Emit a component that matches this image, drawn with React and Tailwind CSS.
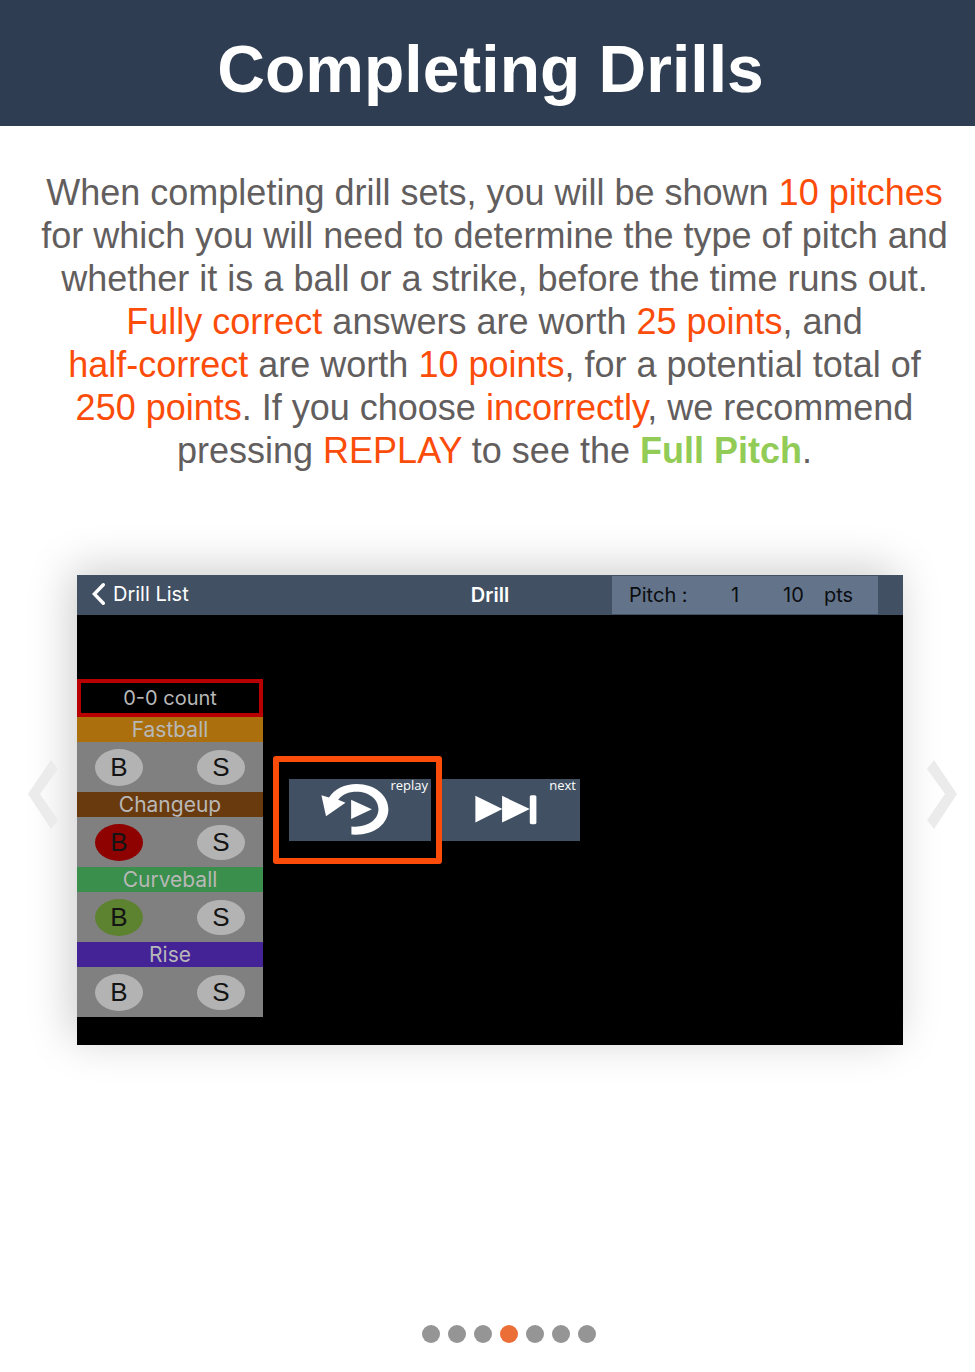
const pitches = [
  { name: 'Fastball', band: 'bg-[#ab700d]', ball: 'bg-[#b3b3b3]' },
  { name: 'Changeup', band: 'bg-[#6a3a0f]', ball: 'bg-[#8f0202]' },
  { name: 'Curveball', band: 'bg-[#398f4b]', ball: 'bg-[#5d8230]' },
  { name: 'Rise', band: 'bg-[#432396]', ball: 'bg-[#b3b3b3]' },
];

const slides = [1, 2, 3, 4, 5, 6, 7];
const currentSlide = 4;

function Hot({ children }) {
  return <span className="text-[#fc4c0a]">{children}</span>;
}

function Header() {
  return (
    <header className="flex h-[126px] items-center justify-center bg-[#2f3d52] pt-3 pl-[6px]">
      <h1 className="text-[66px] leading-none font-bold text-white">Completing Drills</h1>
    </header>
  );
}

function Intro() {
  return (
    <p className="pt-[45px] pl-[14px] text-center text-[36px] leading-[43px] text-[#625e5e]">
      When completing drill sets, you will be shown <Hot>10 pitches</Hot>
      <br />
      for which you will need to determine the type of pitch and
      <br />
      whether it is a ball or a strike, before the time runs out.
      <br />
      <Hot>Fully correct</Hot> answers are worth <Hot>25 points</Hot>, and
      <br />
      <Hot>half-correct</Hot> are worth <Hot>10 points</Hot>, for a potential total of
      <br />
      <Hot>250 points</Hot>. If you choose <Hot>incorrectly</Hot>, we recommend
      <br />
      pressing <Hot>REPLAY</Hot> to see the <b className="text-[#92cc57]">Full Pitch</b>.
    </p>
  );
}

function DrillBar() {
  return (
    <div className="grid h-10 grid-cols-[1fr_auto_1fr] items-center bg-[#415163] text-[20px] leading-none text-white">
      <a href="#drills" className="flex h-[38px] items-center gap-2 self-start pl-[15px]">
        <svg className="h-[22px] w-[13px]" viewBox="0 0 13 22" fill="none" stroke="currentColor" strokeWidth="3.4" strokeLinecap="round" strokeLinejoin="miter" aria-hidden="true">
          <path d="M11.3 1.8 L2.3 11 L11.3 20.2" />
        </svg>
        Drill List
      </a>
      <h2 className="font-semibold">Drill</h2>
      <div className="flex justify-end pr-[25px]">
        <div className="flex h-[38px] w-[266px] items-center bg-[#63748a] pl-[17px] text-[#0b0d10]">
          <span className="w-[102px]">Pitch :</span>
          <span className="w-[52px]">1</span>
          <span className="w-[41px]">10</span>
          <span>pts</span>
        </div>
      </div>
    </div>
  );
}

function PitchPicker() {
  return (
    <div className="mt-16 w-[186px] shrink-0 text-center text-[21px] text-[#b8b8b8]">
      <div className="flex h-[38px] items-center justify-center border-[4px] border-[#b80000] bg-black text-[20px] leading-none">
        0-0 count
      </div>
      {pitches.map((p) => (
        <div key={p.name}>
          <div className={`h-[25px] leading-[25px] ${p.band}`}>{p.name}</div>
          <div className="flex h-[50px] items-center justify-between bg-[#808080] px-[18px] font-['Liberation_Sans',Arial,sans-serif] text-[26px] leading-none text-[#141414]">
            <button type="button" aria-label={`${p.name} ball`} className={`h-[37px] w-12 rounded-[50%] ${p.ball}`}>
              B
            </button>
            <button type="button" aria-label={`${p.name} strike`} className="h-[35px] w-12 rounded-[50%] bg-[#b3b3b3]">
              S
            </button>
          </div>
        </div>
      ))}
    </div>
  );
}

function Playback() {
  return (
    <div className="mt-[141px] ml-[10px] flex h-[108px] items-center font-['Open_Sans','Noto_Sans',sans-serif] text-[13px] leading-none text-white">
      <div className="flex h-full items-center rounded-[3px] border-[6px] border-[#fc4c0a] pr-[5px] pl-[10px]">
        <button type="button" className="relative h-[62px] w-[142px] bg-[#415163]">
          <svg className="size-full" viewBox="72 101 426 188" fill="currentColor" aria-hidden="true">
            <path d="M168 150 L191 157 C208 131 238 116 275 116 C330 116 371 150 371 193 C371 237 330 270 272 270 L259 269 L259 245 C305 250 341 226 341 193 C341 163 312 140 275 140 C250 140 232 148 219 164 L241 173 L182 214 Z" />
            <path d="M258 164 L321 193 L258 222 Z" />
          </svg>
          <span className="absolute top-0 right-[3px]">replay</span>
        </button>
      </div>
      <button type="button" className="relative h-[62px] w-[138px] bg-[#415163]">
        <svg className="size-full" viewBox="531 101 414 188" fill="currentColor" aria-hidden="true">
          <path d="M630 152 L712 192 L630 233 Z M711 152 L795 192 L711 233 Z" />
          <rect x="795" y="150" width="20" height="88" rx="5" />
        </svg>
        <span className="absolute top-0 right-1">next</span>
      </button>
    </div>
  );
}

function Arrow({ points, label }) {
  return (
    <button type="button" aria-label={label} className="relative mt-[185px] h-[69px] w-[30px] shrink-0 text-[#ebebeb]">
      <svg className="size-full" viewBox="0 0 30 69" fill="currentColor" aria-hidden="true">
        <polygon points={points} />
      </svg>
    </button>
  );
}

export default function App() {
  return (
    <div className="flex min-h-screen flex-col bg-white font-['Liberation_Sans',Arial,sans-serif]">
      <Header />
      <main className="flex grow flex-col">
        <Intro />
        <section className="mt-[103px] flex items-start pr-[18px] pl-7">
          <Arrow label="Previous" points="23,0 30,9 12,34 30,60 23,69 0,34" />
          <div className="mr-6 ml-[19px] h-[470px] grow bg-black font-[Inter,sans-serif] shadow-[-6px_-6px_42px_rgba(0,0,0,0.2)]">
            <DrillBar />
            <div className="flex items-start">
              <PitchPicker />
              <Playback />
            </div>
          </div>
          <Arrow label="Next" points="7,0 0,9 18,34 0,60 7,69 30,34" />
        </section>
        <nav aria-label="Slides" className="mt-auto flex justify-center gap-2 pb-[29px] pl-[42px]">
          {slides.map((n) => (
            <button
              key={n}
              type="button"
              aria-label={`Slide ${n}`}
              className={`size-[18px] rounded-full ${n === currentSlide ? 'bg-[#ea6e35]' : 'bg-[#959595]'}`}
            />
          ))}
        </nav>
      </main>
    </div>
  );
}
